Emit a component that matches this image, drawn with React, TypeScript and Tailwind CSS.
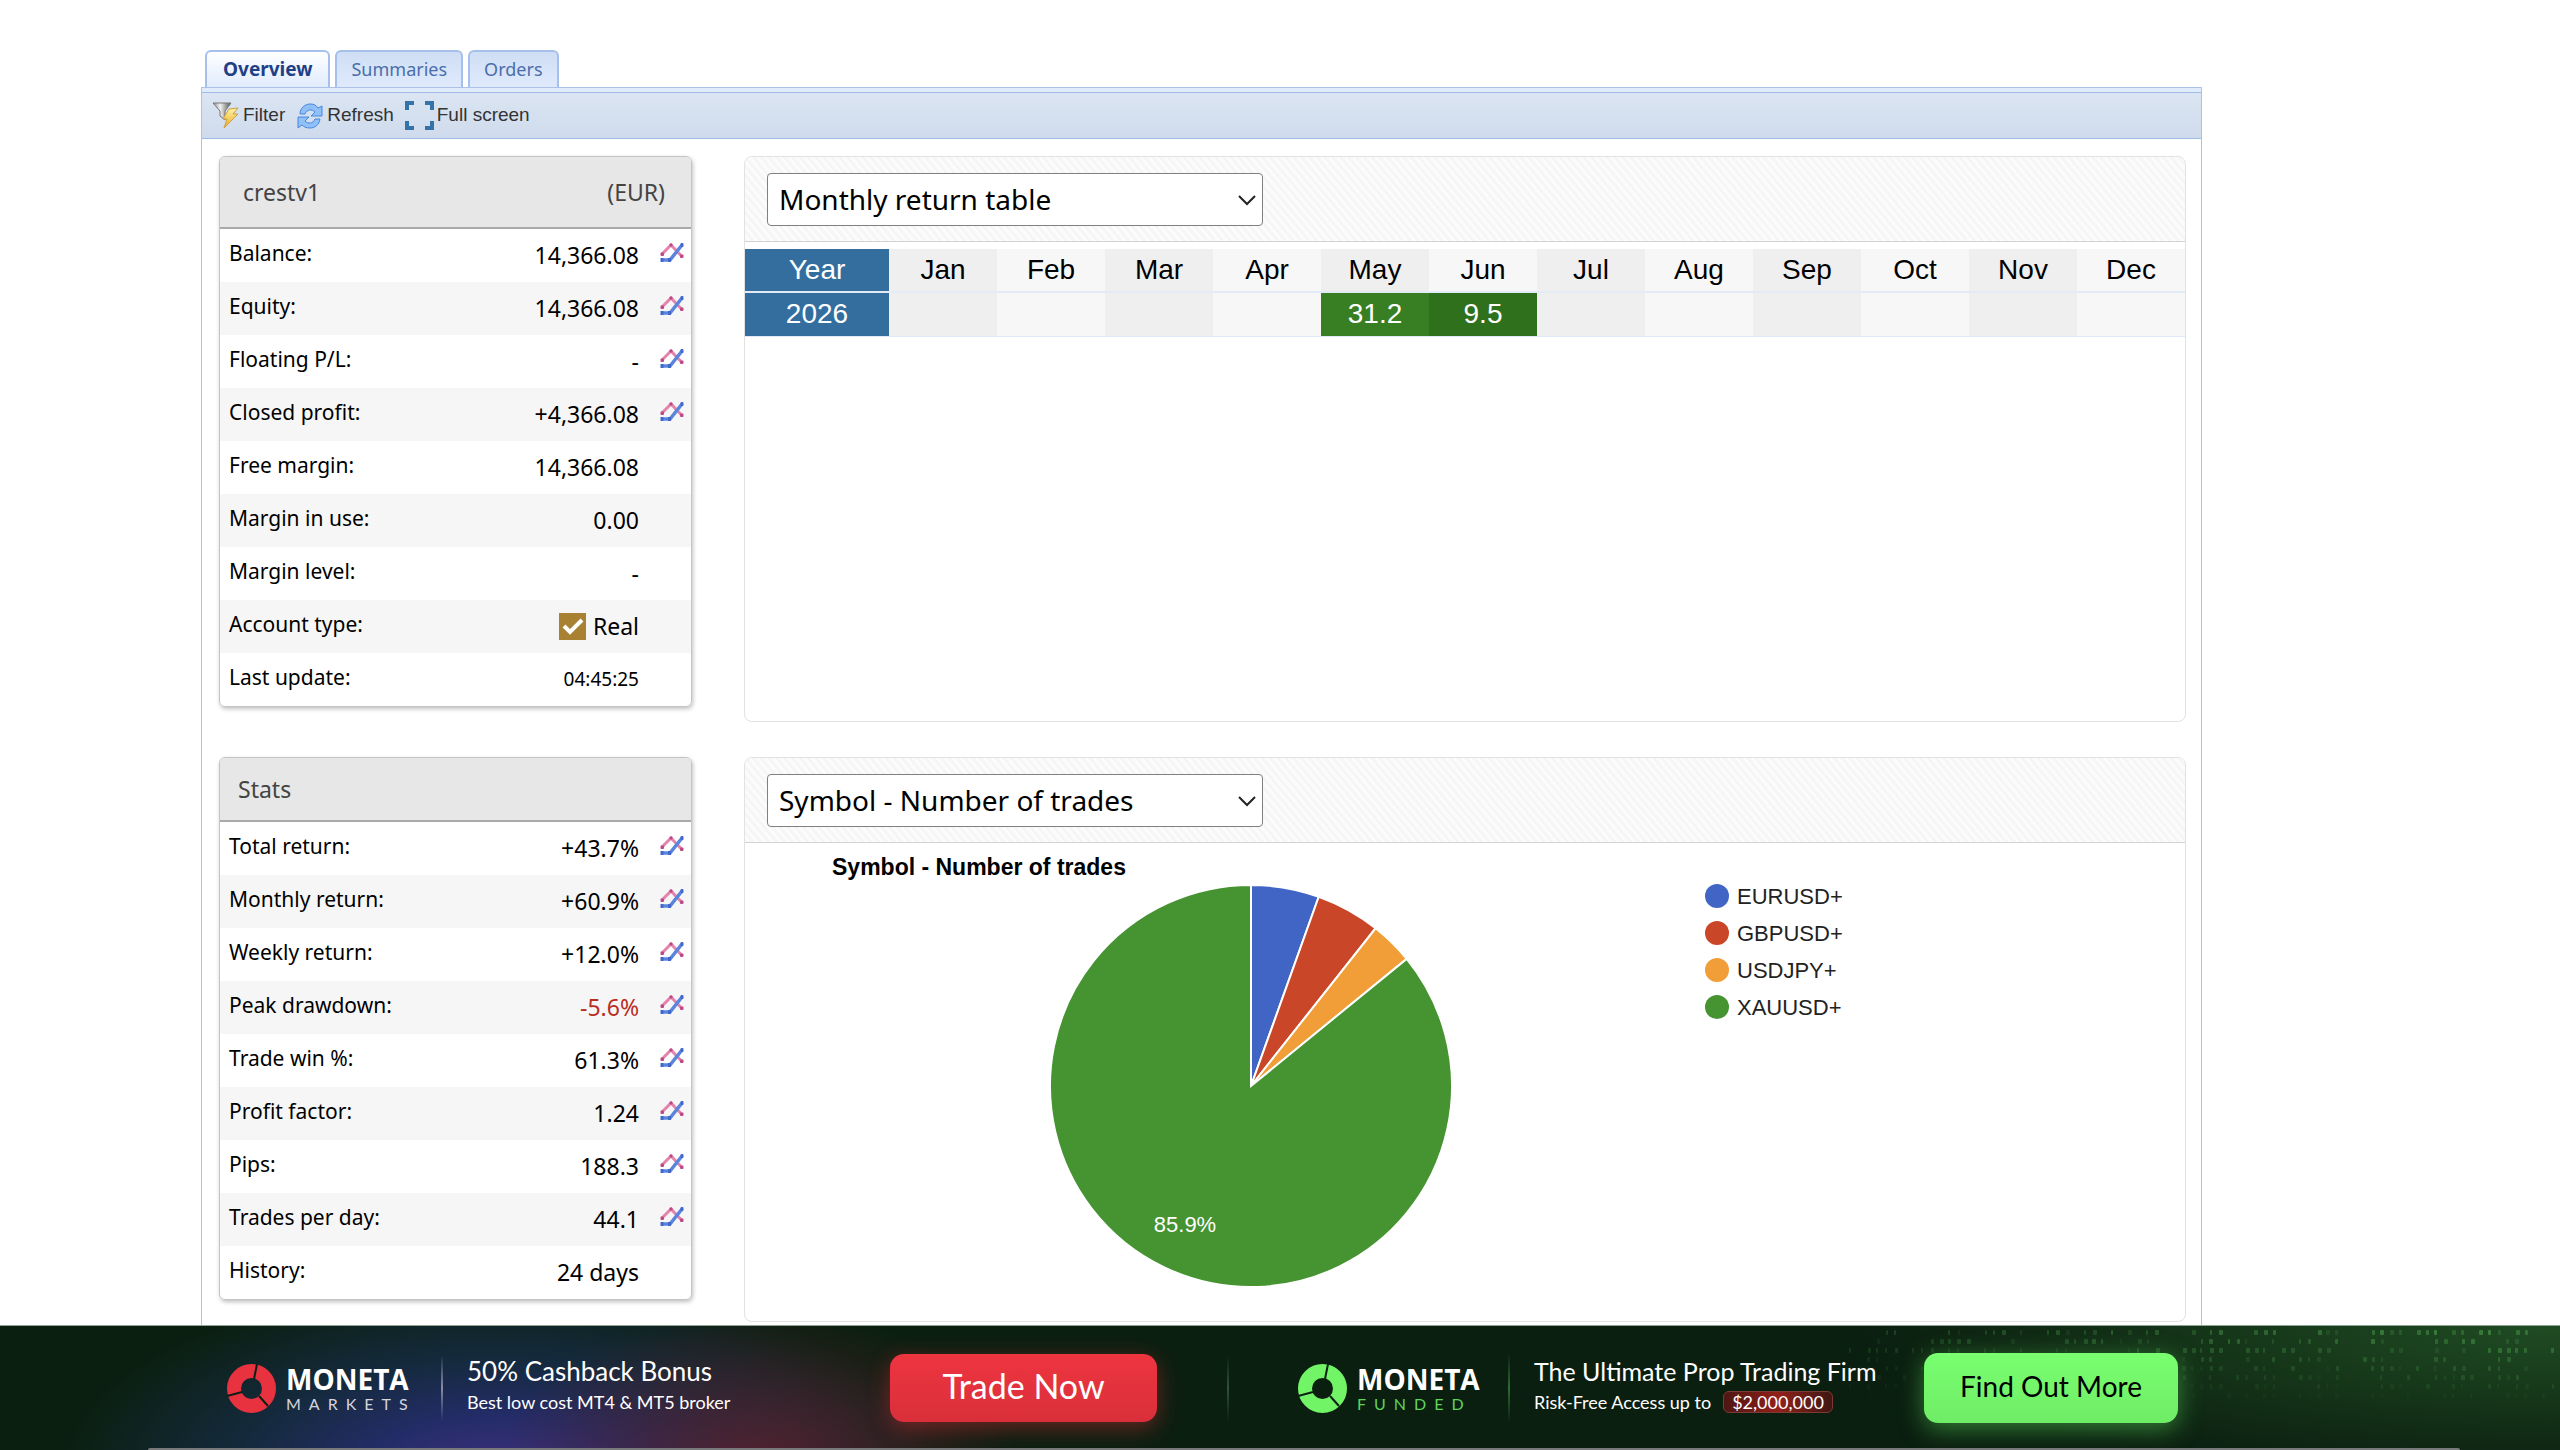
import { useState } from "react";

type Row = {
  label: string;
  value: string;
  chart?: boolean;
  kind?: "negative" | "small" | "check";
};

const tabs = ["Overview", "Summaries", "Orders"];

const account: Row[] = [
  { label: "Balance:", value: "14,366.08", chart: true },
  { label: "Equity:", value: "14,366.08", chart: true },
  { label: "Floating P/L:", value: "-", chart: true },
  { label: "Closed profit:", value: "+4,366.08", chart: true },
  { label: "Free margin:", value: "14,366.08" },
  { label: "Margin in use:", value: "0.00" },
  { label: "Margin level:", value: "-" },
  { label: "Account type:", value: "Real", kind: "check" },
  { label: "Last update:", value: "04:45:25", kind: "small" },
];

const stats: Row[] = [
  { label: "Total return:", value: "+43.7%", chart: true },
  { label: "Monthly return:", value: "+60.9%", chart: true },
  { label: "Weekly return:", value: "+12.0%", chart: true },
  { label: "Peak drawdown:", value: "-5.6%", chart: true, kind: "negative" },
  { label: "Trade win %:", value: "61.3%", chart: true },
  { label: "Profit factor:", value: "1.24", chart: true },
  { label: "Pips:", value: "188.3", chart: true },
  { label: "Trades per day:", value: "44.1", chart: true },
  { label: "History:", value: "24 days" },
];

const months = ["Jan", "Feb", "Mar", "Apr", "May", "Jun", "Jul", "Aug", "Sep", "Oct", "Nov", "Dec"];
const returns: Record<string, string> = { May: "31.2", Jun: "9.5" };

const symbols = [
  { name: "EURUSD+", share: 5.47, color: "#4165c5" },
  { name: "GBPUSD+", share: 5.17, color: "#ca4628" },
  { name: "USDJPY+", share: 3.46, color: "#f19d38" },
  { name: "XAUUSD+", share: 85.9, color: "#459331" },
];

function FilterIcon() {
  return (
    <svg width="28" height="28" viewBox="0 0 28 28" aria-hidden="true">
      <defs>
        <linearGradient id="funnel" x1="0" x2="1">
          <stop offset="0" stopColor="#8a8a8a" />
          <stop offset="0.4" stopColor="#f2f2f2" />
          <stop offset="1" stopColor="#4f4f4f" />
        </linearGradient>
        <linearGradient id="bolt" x1="0" x2="0" y1="0" y2="1">
          <stop offset="0" stopColor="#fff3a8" />
          <stop offset="1" stopColor="#e9ad22" />
        </linearGradient>
      </defs>
      <path d="M1 1h18l-6 8v9l-5-4v-5z" fill="url(#funnel)" stroke="#777" />
      <path d="M17 7l9-1-5 6h5L12 26l3-9h-4z" fill="url(#bolt)" stroke="#cf9f3a" strokeLinejoin="round" />
    </svg>
  );
}

function RefreshIcon() {
  return (
    <svg width="28" height="28" viewBox="0 0 28 28" aria-hidden="true">
      <g fill="#8fc0f7" stroke="#4886dc" strokeLinejoin="round">
        <path d="M4 12C4 6 9 2 14 2c4 0 6 1 8 4l4-2v10H15l4-4c-3-3-8-3-10 2z" />
        <path d="M24 17c-1 6-5 9-10 9-4 0-6-1-8-3l-4 3V15h11l-4 4c3 3 8 3 10-2z" />
      </g>
    </svg>
  );
}

function FullScreenIcon() {
  return (
    <svg width="29" height="29" viewBox="0 0 29 29" fill="none" stroke="#3473a8" strokeWidth="4" aria-hidden="true">
      <path d="M2 9V2h7M20 2h7v7M27 20v7h-7M9 27H2v-7" />
    </svg>
  );
}

function ChartIcon() {
  return (
    <svg width="24" height="19" viewBox="0 0 24 19" className="block" aria-hidden="true">
      <path d="M2 11l9-9 10.500 11" fill="none" stroke="#e483ab" strokeWidth="3" />
      <g fill="#bb4a86">
        <rect x="0.500" y="9.500" width="3.500" height="3.500" rx="1" />
        <rect x="9.500" y="0.500" width="3" height="3" rx="1" />
        <rect x="20" y="11.500" width="3.500" height="3.500" rx="1" />
      </g>
      <path d="M1 17h9L22 2" fill="none" stroke="#5a85dc" strokeWidth="3.500" />
      <g fill="#4368cc">
        <rect x="0.500" y="15" width="3" height="4" />
        <rect x="8" y="15" width="3" height="4" />
        <rect x="20.500" y="0" width="3" height="4" rx="1" />
      </g>
    </svg>
  );
}

function CheckIcon() {
  return (
    <svg width="27" height="27" viewBox="0 0 27 27" aria-hidden="true">
      <rect width="27" height="27" fill="#a88132" />
      <path d="M5 13l6 6L23 7" fill="none" stroke="#fff" strokeWidth="4" />
    </svg>
  );
}

function InfoTable({ rows }: { rows: Row[] }) {
  return (
    <table className="w-full border-collapse">
      <tbody>
        {rows.map((row) => (
          <tr key={row.label} className="h-[53px] align-top even:bg-[#f6f6f6]">
            <th scope="row" className="pl-[9px] text-left text-[21px] leading-[48px] font-normal">
              {row.label}
            </th>
            <td
              className={`text-right leading-[52px] ${row.kind === "small" ? "text-[19px]" : "text-[23px]"} ${
                row.kind === "negative" ? "text-[#b92d22]" : ""
              }`}
            >
              {row.kind === "check" ? (
                <span className="flex items-center justify-end gap-[7px]">
                  <CheckIcon />
                  {row.value}
                </span>
              ) : (
                row.value
              )}
            </td>
            <td className="w-[52px] pt-[14px] pl-[21px]">
              {row.chart && (
                <button aria-label={`Show chart, ${row.label}`} className="block">
                  <ChartIcon />
                </button>
              )}
            </td>
          </tr>
        ))}
      </tbody>
    </table>
  );
}

function PanelSelect({ label, options }: { label: string; options: string[] }) {
  return (
    <div className="h-[85px] border-b border-[#d2d2d2] rounded-t-lg pl-[22px] pt-4 bg-[repeating-linear-gradient(50deg,#f4f4f4_0px,#fcfcfc_3px,#fcfcfc_4px,#f4f4f4_6px)]">
      <div className="relative w-[496px]">
        <select
          aria-label={label}
          className="appearance-none w-full h-[53px] rounded-[4px] border border-[#808080] bg-white pl-[11px] pr-10 pb-px text-[28px] text-black"
        >
          {options.map((o) => (
            <option key={o}>{o}</option>
          ))}
        </select>
        <svg
          className="absolute right-[7px] top-[21px] pointer-events-none"
          width="18"
          height="12"
          viewBox="0 0 18 12"
          fill="none"
          stroke="#222"
          strokeWidth="2"
          aria-hidden="true"
        >
          <path d="M1 2l8 8 8-8" />
        </svg>
      </div>
    </div>
  );
}

function ReturnTable() {
  return (
    <table className="w-full mt-[7px] table-fixed border-collapse text-center text-[28px] leading-[42px] font-['Liberation_Sans',Arial,sans-serif]">
      <thead>
        <tr className="border-b-2 border-[#e3ebf6]">
          <th scope="col" className="w-1/10 h-[43px] p-0 font-normal bg-[#336e9f] text-white">
            Year
          </th>
          {months.map((m) => (
            <th key={m} scope="col" className="p-0 font-normal odd:bg-[#f7f7f7] even:bg-[#efefef]">
              {m}
            </th>
          ))}
        </tr>
      </thead>
      <tbody>
        <tr className="border-b border-[#dfe9f8]">
          <th scope="row" className="h-[44px] p-0 font-normal bg-[#336e9f] text-white">
            2026
          </th>
          {months.map((m) => (
            <td
              key={m}
              className={
                returns[m]
                  ? "p-0 text-white odd:bg-[#2f701d] even:bg-[#377f22]"
                  : "p-0 odd:bg-[#f7f7f7] even:bg-[#efefef]"
              }
            >
              {returns[m]}
            </td>
          ))}
        </tr>
      </tbody>
    </table>
  );
}

function SymbolPie() {
  const cx = 506;
  const cy = 243;
  const r = 201;
  const point = (pct: number) => {
    const a = (pct / 100) * Math.PI * 2;
    return `${cx + r * Math.sin(a)} ${cy - r * Math.cos(a)}`;
  };
  let start = 0;
  const slices = symbols.map((s) => {
    const from = start;
    start += s.share;
    return { ...s, d: `M${cx} ${cy}L${point(from)}A${r} ${r} 0 ${s.share > 50 ? 1 : 0} 1 ${point(start)}Z` };
  });

  return (
    <svg
      width="1440"
      height="478"
      viewBox="0 0 1440 478"
      className="block text-[22px] font-['Liberation_Sans',Arial,sans-serif]"
      role="img"
      aria-label="Number of trades by symbol"
    >
      <text x="87" y="32" className="text-[23px] font-bold">
        Symbol - Number of trades
      </text>
      {slices.map((s) => (
        <path key={s.name} d={s.d} fill={s.color} stroke="#fff" strokeWidth="2" />
      ))}
      <text x="440" y="389" textAnchor="middle" fill="#fff">
        85.9%
      </text>
      {symbols.map((s, i) => (
        <g key={s.name}>
          <circle cx="972" cy={53 + i * 37} r="12" fill={s.color} />
          <text x="992" y={61 + i * 37} fill="#222">
            {s.name}
          </text>
        </g>
      ))}
    </svg>
  );
}

function MonetaLogo({ color, name, nameClass }: { color: string; name: string; nameClass: string }) {
  return (
    <div className="flex items-center gap-[10px]">
      <svg width="49" height="49" viewBox="0 0 49 49" aria-hidden="true">
        <circle cx="24.500" cy="24.500" r="17.500" fill="none" stroke={color} strokeWidth="14" />
        <path d="M27 15L30 0M15 28L0 32M32 32l9 10" stroke="#0c1f16" strokeWidth="2" />
      </svg>
      <div>
        <div className="text-[28px] leading-[32px] font-bold font-['Open_Sans',sans-serif]">MONETA</div>
        <div className={`text-[16px] leading-[18px] tracking-[0.5em] font-['Lato',sans-serif] ${nameClass}`}>{name}</div>
      </div>
    </div>
  );
}

// falling glyph columns in the banner's right corner
const glyphs = Array.from({ length: 640 }, (_, i) => {
  const col = i % 80;
  const row = Math.floor(i / 80);
  const n = (col * 73 + row * 151 + ((col * (row + 3) * 37) % 41)) % 100;
  const dense = (col * 29) % 7 > 2;
  return {
    x: col * 9 + (n % 2),
    y: 4 + row * 9,
    w: 2 + (n % 3),
    show: n > (dense ? 35 : 75),
    o: (0.2 + (n % 50) / 110) * (1 - row / 8) * (0.35 + col / 130),
  };
});

function Banner() {
  return (
    <footer className="fixed inset-x-0 bottom-0 h-[125px] overflow-hidden text-white font-['Lato',sans-serif] bg-[#0b1f10] border-t border-[#8fa394] bg-[radial-gradient(ellipse_260px_150px_at_760px_135px,rgba(92,32,44,0.85)_0%,transparent_100%),radial-gradient(ellipse_440px_190px_at_500px_145px,#3d3080_0%,#232c66_30%,#142a3c_60%,transparent_100%),radial-gradient(ellipse_700px_150px_at_100%_0%,#204c23_0%,transparent_100%)]">
      <svg className="absolute right-0 top-0" width="720" height="80" viewBox="0 0 720 80" aria-hidden="true">
        {glyphs
          .filter((g) => g.show)
          .map((g) => (
            <rect key={`${g.x}-${g.y}`} x={g.x} y={g.y} width={g.w} height="5" rx="1" fill="#4fa84f" opacity={g.o} />
          ))}
      </svg>
      <div className="relative flex items-center h-full pl-[227px]">
        <div className="w-[214px]">
          <MonetaLogo color="#e8323f" name="MARKETS" nameClass="text-[#d5d5dc]" />
        </div>
        <div className="w-[2px] h-[66px] bg-linear-to-b from-transparent via-[#8b8ba5] to-transparent" />
        <div className="w-[447px] pl-6 pb-2">
          <div className="text-[26px] leading-[36px]">50% Cashback Bonus</div>
          <div className="text-[18px] leading-[26px]">Best low cost MT4 &amp; MT5 broker</div>
        </div>
        <button className="w-[267px] h-[68px] pb-[6px] rounded-[14px] bg-linear-to-b from-[#ee3540] to-[#d92f3a] text-[34px] shadow-[0_6px_22px_rgba(220,45,55,0.45)]">
          Trade Now
        </button>
        <div className="w-[2px] h-[66px] ml-[70px] mr-[69px] bg-linear-to-b from-transparent via-[#31513a] to-transparent" />
        <div className="w-[210px]">
          <MonetaLogo color="#71f567" name="FUNDED" nameClass="text-[#5fd45c]" />
        </div>
        <div className="w-[2px] h-[70px] bg-linear-to-b from-transparent via-[#2f6b35] to-transparent" />
        <div className="w-[414px] pl-6 pb-2 whitespace-nowrap">
          <div className="text-[25px] leading-[36px]">The Ultimate Prop Trading Firm</div>
          <div className="flex items-center text-[18px] leading-[26px]">
            Risk-Free Access up to
            <span className="ml-3 px-2 h-[22px] leading-[20px] rounded-md border border-[#7c3a34] bg-linear-to-r from-[#4d1613] via-[#931f19] to-[#3f1612]">
              $2,000,000
            </span>
          </div>
        </div>
        <button className="w-[254px] h-[70px] pb-1 rounded-[14px] bg-linear-to-b from-[#79ff70] to-[#6fec66] text-black text-[28px] shadow-[0_6px_24px_rgba(90,220,90,0.5)]">
          Find Out More
        </button>
      </div>
      <div className="absolute left-[148px] right-[100px] bottom-0 h-[2px] rounded-t-full bg-[#77797a]" />
    </footer>
  );
}

export default function App() {
  const [active, setActive] = useState("Overview");

  return (
    <div className="min-h-screen flex flex-col bg-white text-black pt-[50px] pl-[201px] pr-[358px] font-['Noto_Sans',sans-serif]">
      <nav className="flex items-end gap-[5px] pl-1 leading-[34px]">
        {tabs.map((tab) => (
          <button
            key={tab}
            onClick={() => setActive(tab)}
            className={`h-[37px] pb-[2px] rounded-t-[6px] border-2 border-b-0 border-[#a5c0ea] ${
              active === tab
                ? "px-4 bg-linear-to-b from-white to-[#e0ebfc] text-[19px] text-[#1f3f87] font-bold"
                : "px-[14px] bg-linear-to-b from-[#cfdef5] to-[#dfeafc] text-[18px] text-[#4b6ea9]"
            }`}
          >
            {tab}
          </button>
        ))}
      </nav>

      <main className="flex-1 border border-[#abc1e8] border-b-0">
        <div className="h-[4px] bg-[#e0ebfc]" />
        <div className="flex items-center h-[47px] pl-[10px] border-y border-[#9fbbe8] bg-linear-to-b from-[#dbe5f3] to-[#cfdbec] text-[19px] text-[#333] font-['Liberation_Sans',Arial,sans-serif]">
          <button className="flex items-center gap-[3px]">
            <FilterIcon />
            Filter
          </button>
          <button className="flex items-center gap-[3px] ml-[11px]">
            <RefreshIcon />
            Refresh
          </button>
          <button className="flex items-center gap-[3px] ml-[11px]">
            <FullScreenIcon />
            Full screen
          </button>
        </div>

        <div className="grid grid-cols-[473px_1fr] items-start gap-x-[52px] gap-y-[35px] pt-[17px] px-[17px]">
          <section className="rounded-[6px] border border-[#c4c4c4] shadow-[1px_2px_4px_rgba(0,0,0,0.25)] overflow-hidden">
            <header className="flex items-center justify-between h-[72px] pl-[23px] pr-[26px] bg-[#e7e7e7] border-b-2 border-[#a9a9a9] text-[23px] text-[#444]">
              <h2>crestv1</h2>
              <span>(EUR)</span>
            </header>
            <InfoTable rows={account} />
          </section>

          <section className="h-[566px] rounded-lg border border-[#e2e2e2]">
            <PanelSelect label="Returns view" options={["Monthly return table"]} />
            <ReturnTable />
          </section>

          <section className="rounded-[6px] border border-[#c4c4c4] shadow-[1px_2px_4px_rgba(0,0,0,0.25)] overflow-hidden">
            <header className="flex items-center h-[64px] pl-[18px] bg-[#e7e7e7] border-b-2 border-[#a9a9a9] text-[23px] text-[#444]">
              <h2>Stats</h2>
            </header>
            <InfoTable rows={stats} />
          </section>

          <section className="rounded-lg border border-[#e2e2e2]">
            <PanelSelect label="Chart view" options={["Symbol - Number of trades"]} />
            <SymbolPie />
          </section>
        </div>
      </main>

      <Banner />
    </div>
  );
}
